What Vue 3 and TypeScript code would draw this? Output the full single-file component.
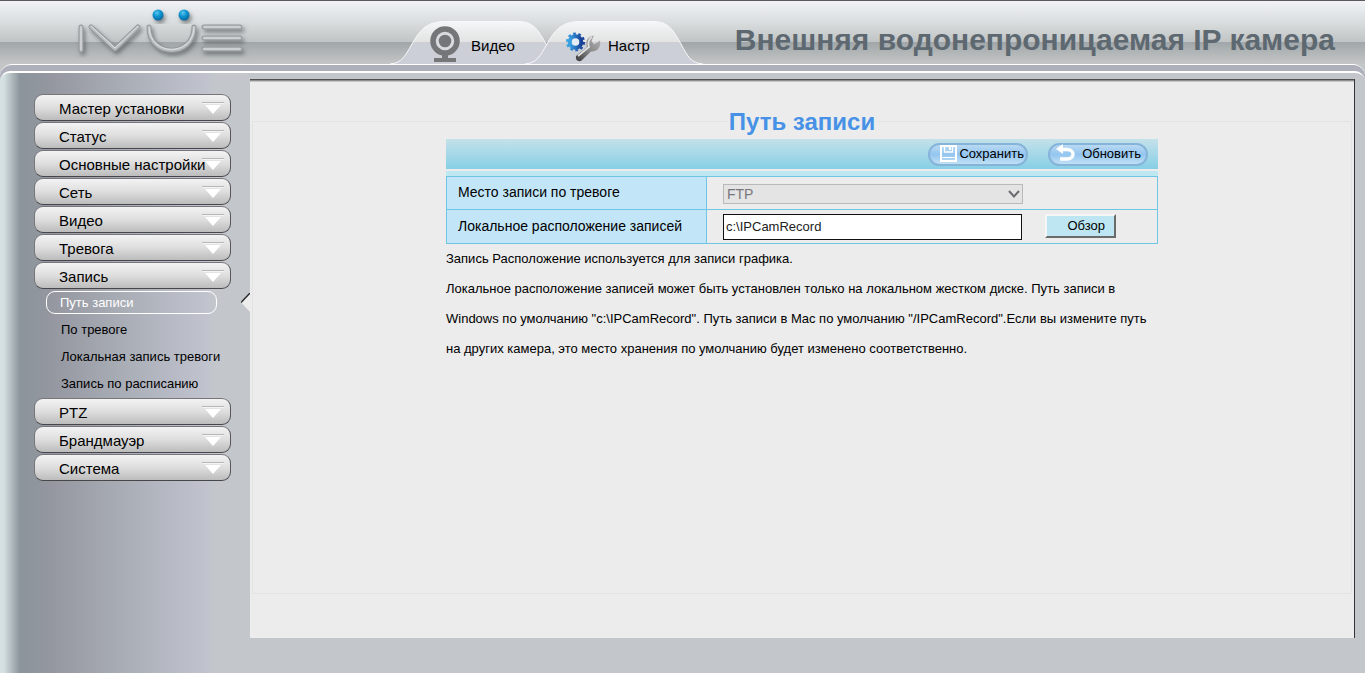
<script setup lang="ts">
import { ref } from 'vue'

interface MenuItem {
  id: string
  title: string
  children?: string[]
}

const menu: MenuItem[] = [
  { id: 'wizard', title: 'Мастер установки' },
  { id: 'status', title: 'Статус' },
  { id: 'basic', title: 'Основные настройки' },
  { id: 'network', title: 'Сеть' },
  { id: 'video', title: 'Видео' },
  { id: 'alarm', title: 'Тревога' },
  {
    id: 'record',
    title: 'Запись',
    children: ['Путь записи', 'По тревоге', 'Локальная запись тревоги', 'Запись по расписанию'],
  },
  { id: 'ptz', title: 'PTZ' },
  { id: 'firewall', title: 'Брандмауэр' },
  { id: 'system', title: 'Система' },
]

const opened = ref('record')
const activePage = ref('Путь записи')
const target = ref('FTP')
const path = ref('c:\\IPCamRecord')

function toggle(id: string) {
  opened.value = opened.value === id ? '' : id
}
</script>

<template>
  <div class="page">
    <header class="header">
      <svg class="logo" viewBox="0 0 180 60" role="img" aria-label="IVUE">
        <defs>
          <radialGradient id="dot" cx="40%" cy="30%" r="70%">
            <stop offset="0" stop-color="#5cc4ee" />
            <stop offset="0.5" stop-color="#0c93cf" />
            <stop offset="1" stop-color="#04699f" />
          </radialGradient>
          <filter id="shade" x="-10%" y="-10%" width="125%" height="140%">
            <feDropShadow dx="2" dy="3" stdDeviation="2" flood-color="#4c5154" flood-opacity="0.65" />
          </filter>
        </defs>
        <g fill="none" stroke-linecap="round" stroke-linejoin="round" filter="url(#shade)">
          <g stroke="#94989a" stroke-width="5">
            <path d="M11 26V49M21 26L45 48L68 26M79 26C79 57 124 57 124 26M134 26H170M134 37H170M134 48H170" />
          </g>
          <g stroke="#bbbec0" stroke-width="3">
            <path d="M11 26V49M21 26L45 48L68 26M79 26C79 57 124 57 124 26M134 26H170M134 37H170M134 48H170" />
          </g>
          <g stroke="#dfe1e2" stroke-width="1">
            <path d="M11 26V49M21 25L45 47L68 25M79 26C79 56 124 56 124 26M134 26H170M134 37H170M134 48H170" />
          </g>
        </g>
        <g fill="url(#dot)" filter="url(#shade)">
          <circle cx="88" cy="14" r="5.500" />
          <circle cx="114" cy="14" r="5.500" />
        </g>
      </svg>

      <nav class="tabs">
        <a class="tab" href="#video">
          <svg class="tab-shape" viewBox="0 0 178 43" preserveAspectRatio="none" aria-hidden="true">
            <defs>
              <linearGradient id="tabFill" x1="0" y1="0" x2="0" y2="1">
                <stop offset="0" stop-color="#f4f6f8" />
                <stop offset="0.48" stop-color="#e2e3e2" />
                <stop offset="0.49" stop-color="#cccfd6" />
                <stop offset="1" stop-color="#cdcfd8" />
              </linearGradient>
            </defs>
            <path d="M0 43C12 42 15 35 22 23C31 7 38 .5 56 .5H128C144 .5 148 9 156 23C163 36 166 42 178 43Z" fill="url(#tabFill)" />
            <path d="M0 43C12 42 15 35 22 23C31 7 38 .5 56 .5H128C144 .5 148 9 156 23C163 36 166 42 178 43" fill="none" stroke="#f7f8f9" />
          </svg>
          <svg class="tab-icon" viewBox="0 0 36 38" aria-hidden="true">
            <circle cx="16" cy="17" r="12" fill="#d9dbde" stroke="#757678" stroke-width="5.500" />
            <circle cx="16" cy="17" r="6.300" fill="#757678" />
            <path d="M13 30H19V34H27V38H5V34H13Z" fill="#757678" />
          </svg>
          <span class="tab-text">Видео</span>
        </a>
        <a class="tab" href="#settings">
          <svg class="tab-shape" viewBox="0 0 178 43" preserveAspectRatio="none" aria-hidden="true">
            <path d="M0 43C12 42 15 35 22 23C31 7 38 .5 56 .5H128C144 .5 148 9 156 23C163 36 166 42 178 43Z" fill="url(#tabFill)" />
            <path d="M0 43C12 42 15 35 22 23C31 7 38 .5 56 .5H128C144 .5 148 9 156 23C163 36 166 42 178 43" fill="none" stroke="#f7f8f9" />
          </svg>
          <svg class="tab-icon" viewBox="0 0 36 38" aria-hidden="true">
            <defs>
              <linearGradient id="gear" x1="0" y1="0" x2="1" y2="0">
                <stop offset="0" stop-color="#3aa3e6" />
                <stop offset="1" stop-color="#173f96" />
              </linearGradient>
              <linearGradient id="steel" x1="1" y1="0" x2="0" y2="1">
                <stop offset="0" stop-color="#b4b4b4" />
                <stop offset="0.5" stop-color="#8a8a8a" />
                <stop offset="1" stop-color="#3a3a3a" />
              </linearGradient>
            </defs>
            <circle cx="9.500" cy="18" r="5.800" fill="#e4edf6" stroke="url(#gear)" stroke-width="4" />
            <circle cx="9.500" cy="18" r="8.300" fill="none" stroke="url(#gear)" stroke-width="2.500" stroke-dasharray="2.700 2.514" />
            <path d="M10 32L21 23C19 17 22 12 28 11.500L25.500 17L28 20.500L34 16.500C35.500 23 31 28 25 27.500L15 37Q9 38 10 32Z" fill="url(#steel)" />
            <path d="M12 32L23 23C21 18 24 14 26 13" fill="none" stroke="#e2e2e2" stroke-width="1.800" />
          </svg>
          <span class="tab-text">Настр</span>
        </a>
      </nav>

      <h1 class="product">Внешняя водонепроницаемая IP камера</h1>
    </header>

    <div class="frame">
      <div class="shell">
        <aside class="sidebar">
          <ul class="menu">
            <li v-for="item in menu" :key="item.id">
              <button type="button" class="menu-button" :aria-expanded="opened === item.id" @click="toggle(item.id)">
                <span>{{ item.title }}</span>
                <svg class="menu-arrow" viewBox="0 0 22 12" aria-hidden="true">
                  <path d="M0 .5H22" stroke="#b8b8b8" />
                  <path d="M0 1.500H22" stroke="#f4f4f4" />
                  <path d="M3 3H19L11 12Z" fill="#fff" />
                </svg>
              </button>
              <ul v-if="item.children && opened === item.id" class="submenu">
                <li v-for="child in item.children" :key="child" class="submenu-row">
                  <a
                    href="#page"
                    class="submenu-link"
                    :class="{ active: child === activePage }"
                    @click.prevent="activePage = child"
                  >{{ child }}</a>
                  <svg v-if="child === activePage" class="pointer" viewBox="0 0 9 19" aria-hidden="true">
                    <path d="M9 0L0 9.500L9 19Z" fill="#ececec" />
                    <path d="M9 0L0 9.500" stroke="#222" stroke-width="1.300" />
                  </svg>
                </li>
              </ul>
            </li>
          </ul>
        </aside>

        <main class="panel">
          <fieldset class="group">
            <legend class="legend">Путь записи</legend>
            <form class="form" @submit.prevent>
              <div class="toolbar">
                <button type="submit" class="pill save">
                  <svg class="pill-icon" viewBox="0 0 20 18" aria-hidden="true">
                    <path d="M3 2H18V17H3Z" fill="none" stroke="#fff" stroke-width="2" />
                    <path d="M6.500 2V8H14.500V2" fill="none" stroke="#fff" stroke-width="1.300" />
                    <path d="M12 3V6" stroke="#fff" stroke-width="2" />
                    <path d="M3 13.500H18" stroke="#fff" stroke-width="1" />
                  </svg>
                  <span>Сохранить</span>
                </button>
                <button type="button" class="pill reload">
                  <svg class="pill-icon" viewBox="0 0 20 18" aria-hidden="true">
                    <path d="M4 5.500H11C19 5.500 19 15 11 15H4" fill="none" stroke="#fff" stroke-width="3.400" />
                    <path d="M0 5L7 0V10Z" fill="#fff" />
                  </svg>
                  <span>Обновить</span>
                </button>
              </div>

              <table class="fields">
                <tbody>
                  <tr class="row-target">
                    <th scope="row"><label for="target">Место записи по тревоге</label></th>
                    <td>
                      <div class="select-box">
                        <select id="target" v-model="target" class="select" disabled>
                          <option>FTP</option>
                        </select>
                        <svg class="chevron" viewBox="0 0 12 8" aria-hidden="true">
                          <path d="M1 1L6 6.500L11 1" fill="none" stroke="#6b6b72" stroke-width="2" />
                        </svg>
                      </div>
                    </td>
                  </tr>
                  <tr class="row-path">
                    <th scope="row"><label for="path">Локальное расположение записей</label></th>
                    <td>
                      <div class="path-box">
                        <input id="path" v-model="path" class="input" type="text" />
                        <button type="button" class="browse">Обзор</button>
                      </div>
                    </td>
                  </tr>
                </tbody>
              </table>

              <p class="note">Запись Расположение используется для записи графика.</p>
              <p class="note">
                Локальное расположение записей может быть установлен только на локальном жестком диске. Путь записи в
                Windows по умолчанию "c:\IPCamRecord". Путь записи в Mac по умолчанию "/IPCamRecord".Если вы измените путь
                на других камера, это место хранения по умолчанию будет изменено соответственно.
              </p>
            </form>
          </fieldset>
        </main>
      </div>
    </div>
  </div>
</template>

<style>
body {
  margin: 0;
}
</style>

<style scoped>
* {
  box-sizing: border-box;
}

.page {
  display: flex;
  flex-direction: column;
  min-height: 100vh;
  background: #c3c6c7;
  color: #000;
  font-family: "Liberation Sans", Arial, sans-serif;
  font-size: 13px;
}

.header {
  display: flex;
  height: 64px;
  border-top: 1px solid #5d5859;
  padding-right: 30px;
  background: linear-gradient(#f1f3f7 0, #d8dcdd 22px, #c1c4c5 41px, #a0a6a9 41px, #c4c6c6 63px);
}

.logo {
  flex: none;
  width: 180px;
  height: 60px;
  margin: 0 140px 0 70px;
}

.tabs {
  display: flex;
  align-items: flex-end;
}

.tab {
  position: relative;
  display: flex;
  align-items: center;
  width: 178px;
  height: 43px;
  padding-left: 39px;
  color: #000;
  font-size: 15px;
  text-decoration: none;
}

.tab + .tab {
  margin-left: -43px;
  padding-left: 41px;
}

.tab-shape {
  position: absolute;
  inset: 0;
  width: 100%;
  height: 100%;
}

.tab-icon {
  position: relative;
  width: 36px;
  height: 38px;
}

.tab-text {
  position: relative;
  padding: 5px 0 0 6px;
}

.product {
  margin: 0 0 0 auto;
  color: #5d6870;
  font-size: 30px;
  line-height: 78px;
  white-space: nowrap;
}

.frame {
  display: flex;
  flex: 1;
  border-top: 1px solid #fff;
  border-radius: 12px 12px 0 0;
  padding-top: 6px;
  background: #adb0bb;
}

.shell {
  display: flex;
  flex: 1;
  border-top: 2px solid #fff;
  border-radius: 10px 10px 0 0;
  padding: 6px 10px 35px 0;
  background: linear-gradient(
    90deg,
    #d5e2e2 0,
    #d3dfe0 4px,
    #8b949b 20px,
    #9497a0 50px,
    #abafb8 130px,
    #c0c3ce 205px,
    #c3c7cb 215px
  );
}

.sidebar {
  flex: none;
  width: 250px;
  padding: 15px 19px 0 34px;
}

.menu,
.submenu {
  margin: 0;
  padding: 0;
  list-style: none;
}

.submenu {
  margin-top: -1px;
  padding-bottom: 1px;
}

.menu-button {
  display: flex;
  align-items: center;
  justify-content: space-between;
  width: 100%;
  height: 27px;
  margin-bottom: 1px;
  border: 1px solid #77777b;
  border-bottom-color: #47474b;
  border-right-color: #55555a;
  border-radius: 9px;
  padding: 2px 6px 0 24px;
  background: linear-gradient(#f3f3f3, #dedede 50%, #bcbcbc);
  color: #000;
  font: 15px "Liberation Sans", Arial, sans-serif;
  white-space: nowrap;
}

.menu-arrow {
  flex: none;
  width: 22px;
  height: 12px;
  margin: 0 0 2px -10px;
}

.submenu-row {
  position: relative;
  display: flex;
  align-items: center;
  height: 27px;
  padding-left: 12px;
}

.submenu-link {
  width: 171px;
  padding-left: 15px;
  color: #000;
  line-height: 21px;
  text-decoration: none;
  white-space: nowrap;
}

.submenu-link.active {
  border: 1px solid #fff;
  border-radius: 9px;
  padding-left: 13px;
  color: #fff;
}

.pointer {
  position: absolute;
  top: 4px;
  right: -19px;
  width: 9px;
  height: 19px;
}

.panel {
  display: flex;
  flex: 1;
  border-top: 1px solid #505050;
  border-right: 1px solid #333;
  padding: 25px 2px 44px;
  background: #ececec;
  box-shadow: inset 0 1px #8e8e8e, inset 0 2px #c6c6c6;
}

.group {
  flex: 1;
  min-width: 0;
  margin: 0;
  border: 1px solid #e3e3e3;
  padding: 2px 0 0;
}

.legend {
  margin: 0 auto;
  padding: 2px 2px 0;
  color: #4792e6;
  font-size: 24px;
  font-weight: bold;
  line-height: 30px;
}

.form {
  width: 712px;
  margin: 0 auto;
}

.toolbar {
  display: flex;
  align-items: center;
  justify-content: flex-end;
  gap: 20px;
  height: 30px;
  padding-right: 10px;
  background: linear-gradient(#c4e1ea, #87cfe6);
}

.pill {
  display: flex;
  align-items: center;
  justify-content: space-between;
  width: 100px;
  height: 23px;
  border: 2px solid #86b4d8;
  border-radius: 12px;
  padding: 0 2px 2px 8px;
  background: linear-gradient(#b9d9f3, #94c6f0 50%, #c0e0f4);
  color: #000;
  font: 13px "Liberation Sans", Arial, sans-serif;
}

.pill.reload {
  padding: 0 5px 2px 6px;
}

.pill-icon {
  flex: none;
  width: 20px;
  height: 18px;
}

.fields {
  width: 100%;
  margin-top: 2px;
  border-top: 5px solid #bee7f1;
  border-spacing: 0;
}

.fields th,
.fields td {
  border: solid #6fc6e4;
  border-width: 1px 1px 0 0;
  padding: 0;
  text-align: left;
}

.fields th {
  width: 261px;
  border-left-width: 1px;
  padding: 0 0 2px 11px;
  background: #c3e5f8;
  font-size: 14px;
  font-weight: normal;
}

.fields td {
  padding-left: 16px;
}

.row-target {
  height: 33px;
}

.row-path {
  height: 35px;
}

.row-path th,
.row-path td {
  border-bottom-width: 1px;
}

.select-box {
  position: relative;
  width: 300px;
  height: 20px;
  margin-top: 2px;
}

.select {
  width: 100%;
  height: 20px;
  border: 1px solid #b9b9b9;
  border-radius: 0;
  padding: 0 3px;
  appearance: none;
  background: #e4e4e4;
  color: #77777b;
  font: 14px "Liberation Sans", Arial, sans-serif;
  opacity: 1;
}

.chevron {
  position: absolute;
  top: 6px;
  right: 3px;
  width: 12px;
  height: 8px;
}

.path-box {
  display: flex;
  align-items: flex-start;
  gap: 23px;
}

.input {
  width: 299px;
  height: 26px;
  border: 1px solid #111;
  padding: 0 2px;
  background: #fff;
  color: #222;
  font: 13px "Liberation Sans", Arial, sans-serif;
}

.browse {
  width: 71px;
  height: 24px;
  border: 2px solid;
  border-color: #f6f6f6 #6b6b6b #6b6b6b #f6f6f6;
  padding: 0 9px 0 0;
  background: #bde6f2;
  color: #000;
  font: 13px "Liberation Sans", Arial, sans-serif;
  text-align: right;
}

.note {
  margin: 0;
  line-height: 30px;
}
</style>
